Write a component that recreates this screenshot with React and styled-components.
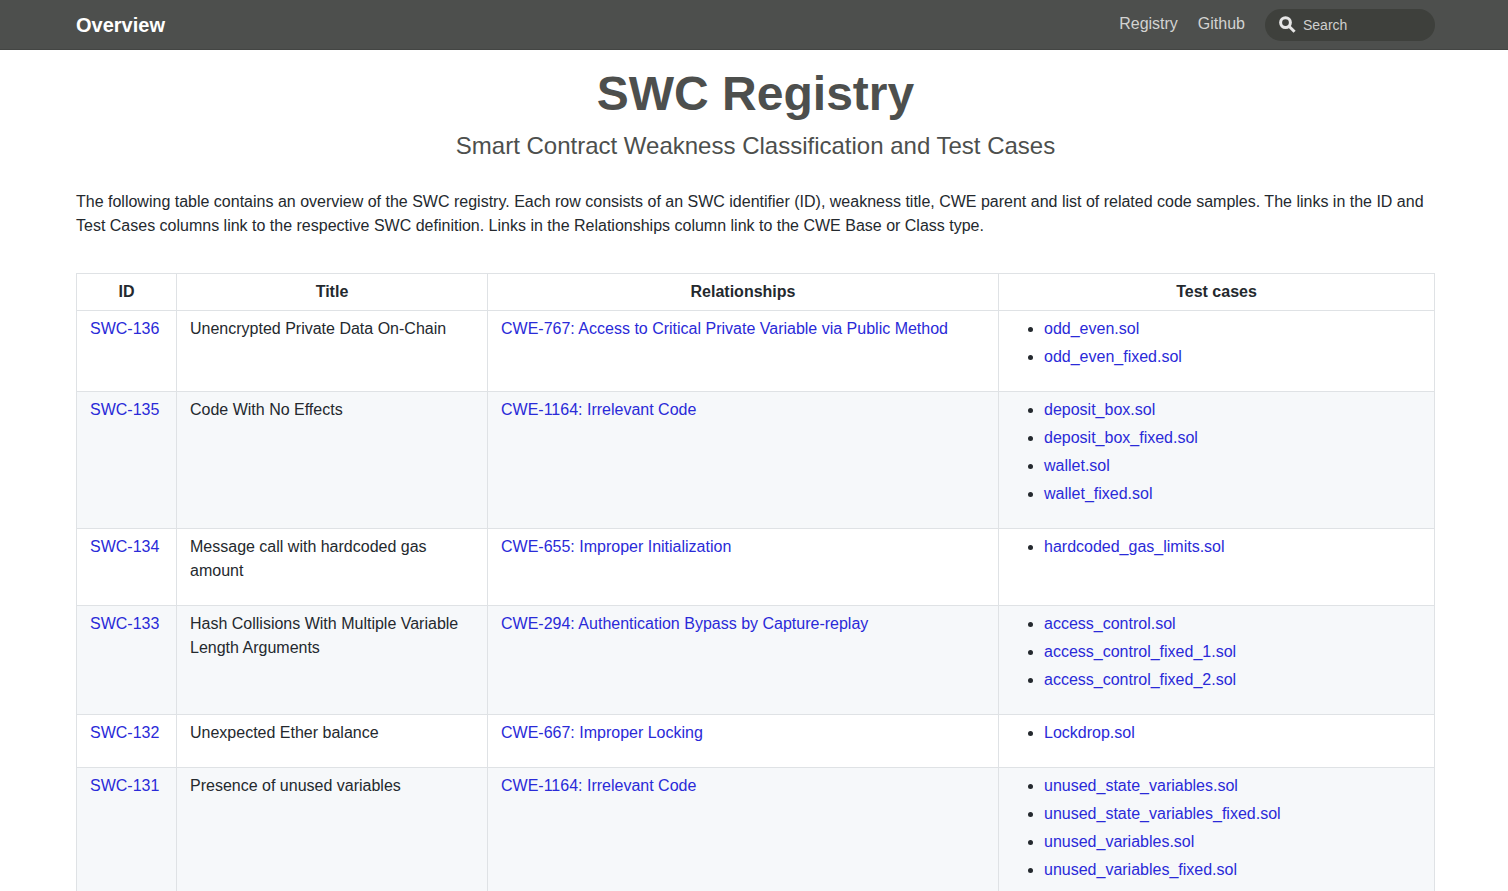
import React from "react";
import styled, { createGlobalStyle } from "styled-components";

const GlobalStyle = createGlobalStyle`
  * { box-sizing: border-box; }
  html { overflow-x: hidden; scrollbar-width: none; }
  body {
    margin: 0;
    background: #fff;
    color: #24292e;
    font-family: "Liberation Sans", Arial, sans-serif;
    font-size: 16px;
    line-height: 24px;
  }
`;

const NavBar = styled.header`
  background: #4d4f4d;
  border-bottom: 1px solid #434543;
  padding: 0 73px 0 76px;
`;

const NavInner = styled.div`
  display: flex;
  align-items: center;
  justify-content: space-between;
  height: 49px;
`;

const Brand = styled.a`
  color: #fff;
  font-size: 20px;
  font-weight: 700;
  text-decoration: none;
`;

const NavLinks = styled.nav`
  display: flex;
  align-items: center;
  gap: 20px;
  height: 48px;
`;

const NavLink = styled.a`
  padding-bottom: 1px;
  color: #d3d3d2;
  text-decoration: none;
`;

const SearchBox = styled.label`
  display: flex;
  align-items: center;
  gap: 7px;
  width: 170px;
  height: 32px;
  padding: 0 14px;
  border-radius: 16px;
  background: #3e403c;
  color: #e6e6e6;

  svg { flex: none; }
`;

const SearchInput = styled.input.attrs({ type: "search" })`
  flex: 1;
  min-width: 0;
  padding: 0;
  border: 0;
  outline: 0;
  background: transparent;
  color: #fff;
  font-family: inherit;
  font-size: 14px;

  &::placeholder { color: #cfcfce; opacity: 1; }
`;

const Page = styled.main`
  padding: 16px 73px 40px 76px;
`;

const Heading = styled.h1`
  margin: 0;
  color: #4d4f4d;
  font-size: 48px;
  line-height: 56px;
  text-align: center;
`;

const Subtitle = styled.p`
  margin: 8px 0 28px;
  color: #4d4f4d;
  font-size: 24px;
  line-height: 32px;
  text-align: center;
`;

const Intro = styled.p`
  margin: 0 0 35px;
`;

const Table = styled.table`
  width: 100%;
  border-collapse: collapse;
  table-layout: fixed;
`;

const Column = styled.col`
  width: ${(p) => p.$width};
`;

const HeadCell = styled.th`
  padding: 6px 13px;
  border: 1px solid #dfe2e5;
`;

const Row = styled.tr`
  background: #fff;

  &:nth-child(even) { background: #f6f8fa; }
`;

const Cell = styled.td`
  padding: 6px 13px;
  border: 1px solid #dfe2e5;
  vertical-align: top;
`;

const CellText = styled.p`
  margin: 0 0 16px;
`;

const FileList = styled.ul`
  margin: 0 0 16px;
  padding-left: 32px;

  li + li { margin-top: 4px; }
`;

const TextLink = styled.a`
  color: #2a2ad8;
  text-decoration: none;
`;

const entries = [
  { id: "SWC-136", title: "Unencrypted Private Data On-Chain", parent: "CWE-767: Access to Critical Private Variable via Public Method", files: ["odd_even.sol", "odd_even_fixed.sol"] },
  { id: "SWC-135", title: "Code With No Effects", parent: "CWE-1164: Irrelevant Code", files: ["deposit_box.sol", "deposit_box_fixed.sol", "wallet.sol", "wallet_fixed.sol"] },
  { id: "SWC-134", title: "Message call with hardcoded gas amount", parent: "CWE-655: Improper Initialization", files: ["hardcoded_gas_limits.sol"] },
  { id: "SWC-133", title: "Hash Collisions With Multiple Variable Length Arguments", parent: "CWE-294: Authentication Bypass by Capture-replay", files: ["access_control.sol", "access_control_fixed_1.sol", "access_control_fixed_2.sol"] },
  { id: "SWC-132", title: "Unexpected Ether balance", parent: "CWE-667: Improper Locking", files: ["Lockdrop.sol"] },
  { id: "SWC-131", title: "Presence of unused variables", parent: "CWE-1164: Irrelevant Code", files: ["unused_state_variables.sol", "unused_state_variables_fixed.sol", "unused_variables.sol", "unused_variables_fixed.sol"] },
];

function SearchIcon() {
  return (
    <svg width="17" height="17" viewBox="0 0 17 17" fill="none" stroke="currentColor" aria-hidden="true">
      <circle cx="6.5" cy="6.6" r="4.9" strokeWidth="3" />
      <path d="M10 10.2l5.6 5.5" strokeWidth="3" />
    </svg>
  );
}

export default function App() {
  return (
    <>
      <GlobalStyle />
      <NavBar>
        <NavInner>
          <Brand href="#overview">Overview</Brand>
          <NavLinks>
            <NavLink href="#registry">Registry</NavLink>
            <NavLink href="#github">Github</NavLink>
            <SearchBox>
              <SearchIcon />
              <SearchInput placeholder="Search" aria-label="Search" />
            </SearchBox>
          </NavLinks>
        </NavInner>
      </NavBar>
      <Page>
        <Heading>SWC Registry</Heading>
        <Subtitle>Smart Contract Weakness Classification and Test Cases</Subtitle>
        <Intro>
          The following table contains an overview of the SWC registry. Each row consists of an SWC
          identifier (ID), weakness title, CWE parent and list of related code samples. The links in
          the ID and Test Cases columns link to the respective SWC definition. Links in the
          Relationships column link to the CWE Base or Class type.
        </Intro>
        <Table>
          <colgroup>
            <Column $width="100px" />
            <Column $width="311px" />
            <Column />
            <Column $width="436px" />
          </colgroup>
          <thead>
            <tr>
              <HeadCell scope="col">ID</HeadCell>
              <HeadCell scope="col">Title</HeadCell>
              <HeadCell scope="col">Relationships</HeadCell>
              <HeadCell scope="col">Test cases</HeadCell>
            </tr>
          </thead>
          <tbody>
            {entries.map((entry) => (
              <Row key={entry.id}>
                <Cell><TextLink href={`#${entry.id}`}>{entry.id}</TextLink></Cell>
                <Cell><CellText>{entry.title}</CellText></Cell>
                <Cell><TextLink href={`#${entry.id}-parent`}>{entry.parent}</TextLink></Cell>
                <Cell>
                  <FileList>
                    {entry.files.map((file) => (
                      <li key={file}><TextLink href={`#${file}`}>{file}</TextLink></li>
                    ))}
                  </FileList>
                </Cell>
              </Row>
            ))}
          </tbody>
        </Table>
      </Page>
    </>
  );
}
